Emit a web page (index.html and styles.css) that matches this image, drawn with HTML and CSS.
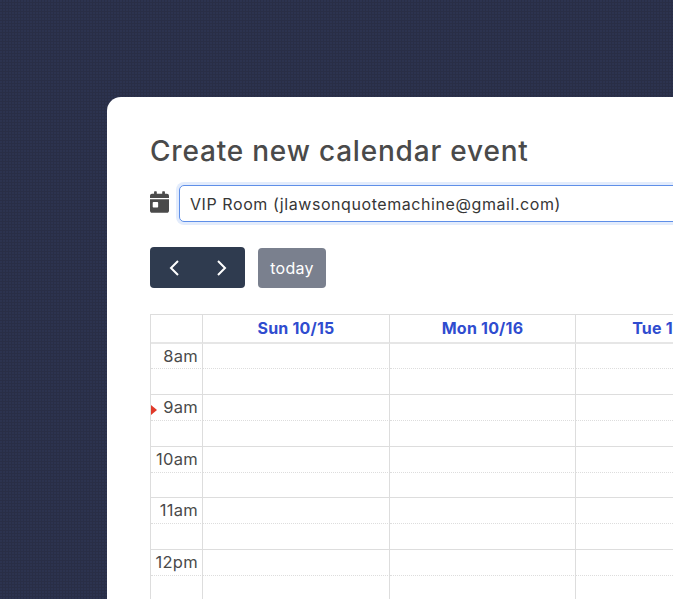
FILE: index.html
```html
<!DOCTYPE html>
<html lang="en">
<head>
<meta charset="utf-8">
<title>Create new calendar event</title>
<link rel="stylesheet" href="styles.css">
</head>
<body>
<main class="card">
  <h1 class="title">Create new calendar event</h1>
  <div class="picker">
    <svg class="cal-icon" viewBox="0 0 448 512" aria-hidden="true"><path d="M0 464c0 26.5 21.500 48 48 48h352c26.500 0 48-21.500 48-48V192H0v272zm64-192c0-8.800 7.200-16 16-16h96c8.800 0 16 7.200 16 16v96c0 8.800-7.200 16-16 16H80c-8.800 0-16-7.200-16-16v-96zM400 64h-48V16c0-8.800-7.200-16-16-16h-32c-8.800 0-16 7.200-16 16v48H160V16c0-8.800-7.200-16-16-16h-32c-8.800 0-16 7.200-16 16v48H48C21.500 64 0 85.500 0 112v48h448v-48c0-26.500-21.500-48-48-48z"/></svg>
    <div class="select">VIP Room (jlawsonquotemachine@gmail.com)</div>
  </div>
  <div class="toolbar">
    <div class="nav">
      <svg class="chev" viewBox="0 0 12 18" aria-hidden="true"><path d="M10 2 3 9l7 7"/></svg>
      <svg class="chev" viewBox="0 0 12 18" aria-hidden="true"><path d="M2 2l7 7-7 7"/></svg>
    </div>
    <div class="today">today</div>
  </div>
  <div class="calendar">
    <div class="head axis"></div>
    <div class="head day">Sun 10/15</div>
    <div class="head day">Mon 10/16</div>
    <div class="head day last">Tue 10/17</div>

    <div class="slot axis hour">8am</div><div class="slot"></div><div class="slot"></div><div class="slot last"></div>
    <div class="slot axis half"></div><div class="slot half"></div><div class="slot half"></div><div class="slot half last"></div>

    <div class="slot axis hour now">9am</div><div class="slot"></div><div class="slot"></div><div class="slot last"></div>
    <div class="slot axis half"></div><div class="slot half"></div><div class="slot half"></div><div class="slot half last"></div>

    <div class="slot axis hour">10am</div><div class="slot"></div><div class="slot"></div><div class="slot last"></div>
    <div class="slot axis half"></div><div class="slot half"></div><div class="slot half"></div><div class="slot half last"></div>

    <div class="slot axis hour">11am</div><div class="slot"></div><div class="slot"></div><div class="slot last"></div>
    <div class="slot axis half"></div><div class="slot half"></div><div class="slot half"></div><div class="slot half last"></div>

    <div class="slot axis hour">12pm</div><div class="slot"></div><div class="slot"></div><div class="slot last"></div>
    <div class="slot axis half"></div><div class="slot half"></div><div class="slot half"></div><div class="slot half last"></div>
  </div>
</main>
</body>
</html>
```
FILE: styles.css
```css
* { box-sizing: border-box; }
html, body { margin: 0; height: 599px; overflow: hidden; }
body {
  width: 673px;
  padding: 97px 0 0 107px;
  background-color: #292e46;
  background-image: radial-gradient(circle at 1px 1px, #2d3350 0.7px, transparent 0.9px);
  background-size: 3px 3px;
  font-family: Inter, "Open Sans", sans-serif;
  color: #4a4a4a;
}
.card {
  width: 566px;
  height: 502px;
  padding: 37px 0 0 43px;
  overflow: hidden;
  background: #fff;
  border-radius: 14px 0 0 0;
}
.title {
  margin: 0;
  font-size: 28px;
  line-height: 34px;
  font-weight: 550;
  letter-spacing: 0.8px;
  color: #4a4a4a;
}
.picker {
  display: flex;
  align-items: center;
  gap: 10px;
  margin-top: 17px;
}
.cal-icon { width: 19px; height: 22px; fill: #4a4a4a; margin-top: -3px; flex: none; }
.select {
  width: 600px;
  height: 37px;
  padding: 1px 0 0 10px;
  line-height: 35px;
  flex: none;
  font-size: 16px;
  letter-spacing: 0.57px;
  color: #363636;
  background: #fff;
  border: 1px solid #5f8fe8;
  border-radius: 5px;
  box-shadow: 0 0 0 3px #e3ecfc;
  white-space: nowrap;
}
.toolbar { display: flex; align-items: flex-start; gap: 13px; margin-top: 25px; }
.nav {
  display: flex;
  align-items: center;
  justify-content: space-between;
  width: 95px;
  height: 41px;
  padding: 0 17px 0 18px;
  background: #2f3b4f;
  border-radius: 4px;
}
.chev { width: 12px; height: 18px; fill: none; stroke: #fff; stroke-width: 2; }
.today {
  width: 68px;
  height: 40px;
  margin-top: 1px;
  line-height: 40px;
  text-align: center;
  font-size: 16px;
  letter-spacing: 0.3px;
  color: #fff;
  background: #7a808e;
  border-radius: 4px;
}
.calendar {
  display: grid;
  grid-template-columns: 52px 187px 186px 187px;
  grid-auto-rows: 25.8px;
  grid-template-rows: 28.6px;
  width: 612px;
  margin-top: 26px;
  border-top: 1px solid #ddd;
  border-left: 1px solid #ddd;
}
.head, .slot { border-right: 1px solid #ddd; border-bottom: 1px solid #ddd; }
.head { border-bottom-width: 2px; border-bottom-color: #e6e6e6; }
.day {
  line-height: 27px;
  text-align: center;
  font-size: 16px;
  font-weight: 700;
  letter-spacing: 0.2px;
  color: #2f4ccf;
  white-space: nowrap;
}
.last { border-right: 0; }
.slot { border-bottom-style: dotted; }
.half { border-bottom-style: solid; }
.hour {
  position: relative;
  padding-right: 4px;
  text-align: right;
  font-size: 16.5px;
  letter-spacing: 0.3px;
  line-height: 24px;
  color: #4a4a4a;
}
.now::before {
  content: "";
  position: absolute;
  left: 0;
  top: 10px;
  border-left: 6px solid #e03a2a;
  border-top: 5px solid transparent;
  border-bottom: 5px solid transparent;
}
```
